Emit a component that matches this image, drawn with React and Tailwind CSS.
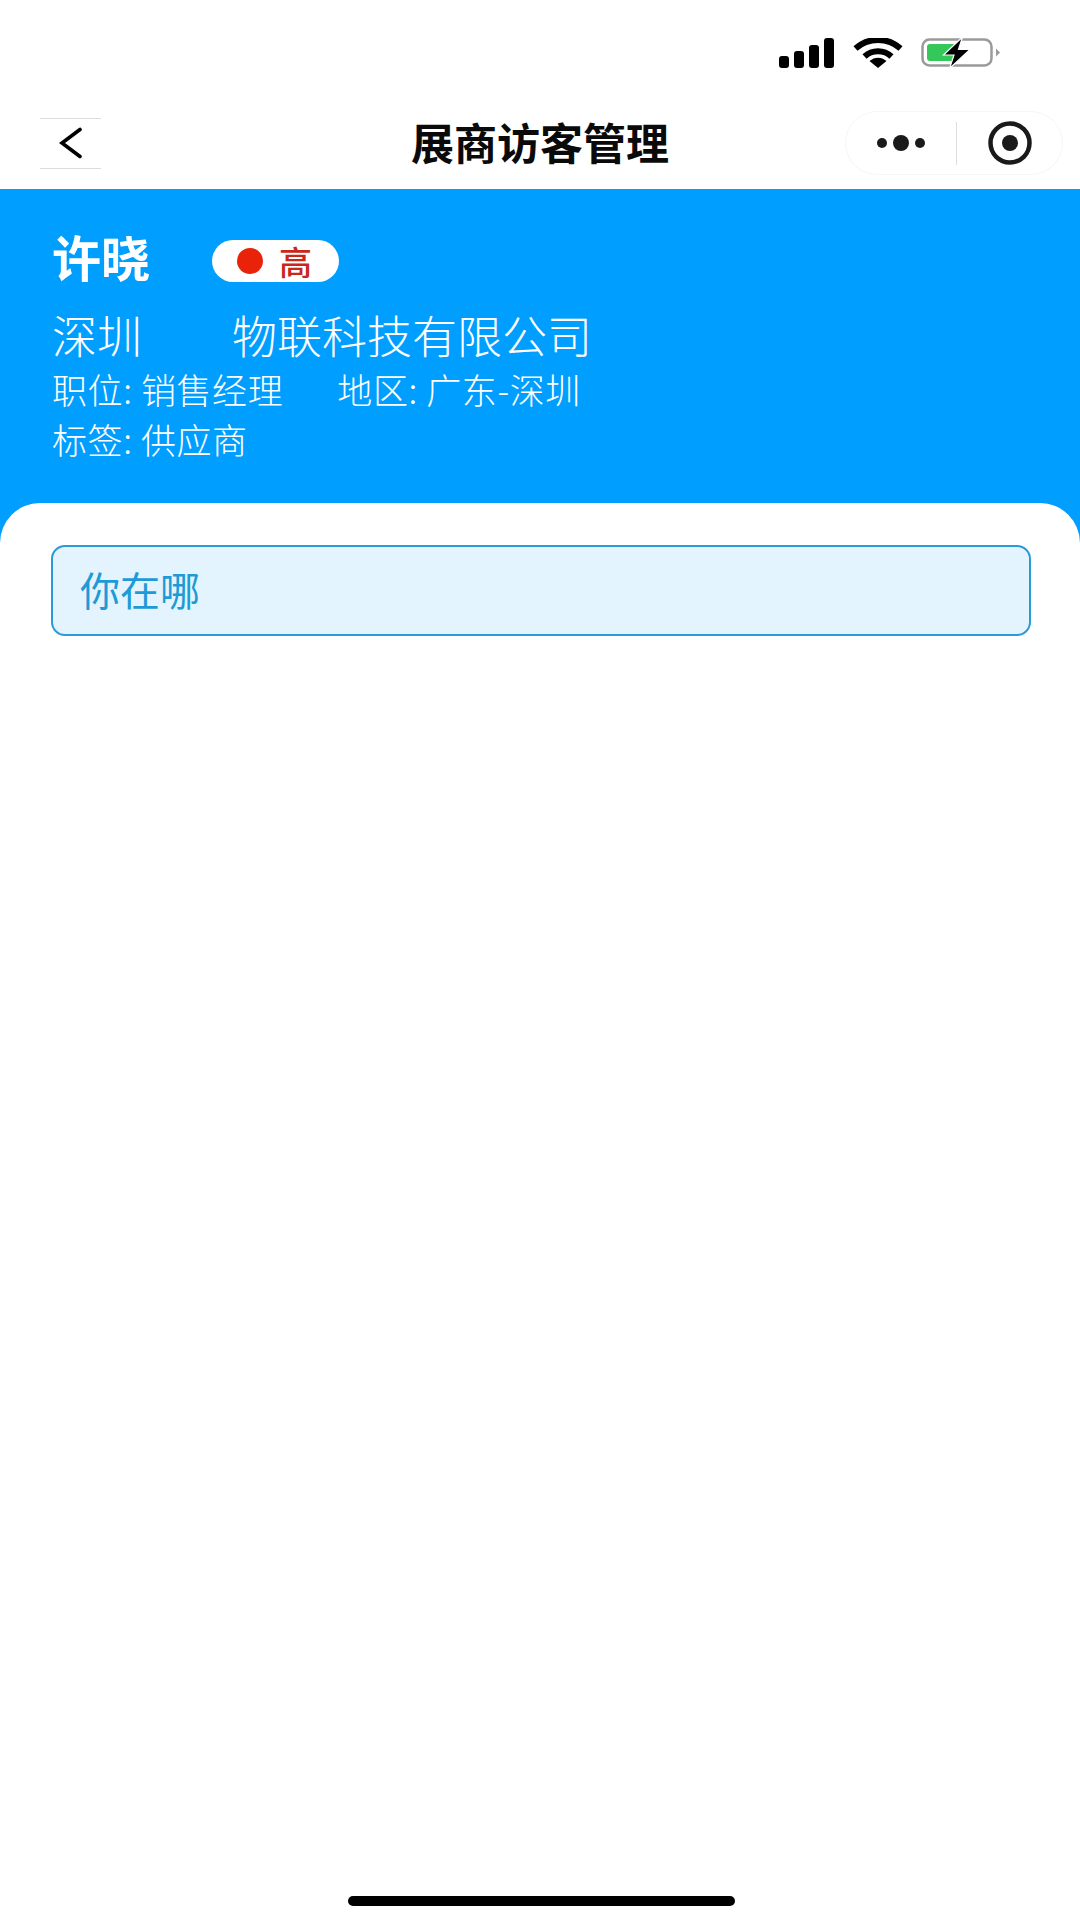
function SignalIcon() {
  return (
    <svg width="56" height="30" viewBox="0 0 56 30" fill="#000">
      <rect x="0" y="18" width="10" height="12" rx="3" />
      <rect x="15" y="13" width="10" height="17" rx="3" />
      <rect x="30" y="7" width="10" height="23" rx="3" />
      <rect x="45" y="0" width="10" height="30" rx="3" />
    </svg>
  )
}

function WifiIcon() {
  return (
    <svg width="50" height="30" viewBox="0 0 50 30" fill="none">
      <path d="M2.5 10.5C15 -1 35 -1 47.5 10.5" stroke="#000" strokeWidth="6" />
      <path d="M11.5 18.5C19 11.5 31 11.5 38.5 18.5" stroke="#000" strokeWidth="6" />
      <path d="M16.5 23L25 30L33.5 23C28.5 18.5 21.5 18.5 16.5 23Z" fill="#000" />
    </svg>
  )
}

function BatteryIcon() {
  return (
    <svg width="80" height="32" viewBox="0 0 80 32" fill="none">
      <rect x="1.5" y="2.5" width="69" height="26" rx="7" stroke="#9a9a9a" strokeWidth="2.5" />
      <path d="M75 11.5L79 15.5L75 19.5Z" fill="#9a9a9a" />
      <rect x="6" y="7" width="32" height="17" rx="3" fill="#34c759" />
      <path d="M41.5 0L22.5 18H33L28.5 31.5L49 12.5H37.5Z" fill="#000" stroke="#fff" strokeWidth="1.2" />
    </svg>
  )
}

function BackIcon() {
  return (
    <svg width="24" height="32" viewBox="0 0 24 32" fill="none">
      <path d="M21 2.5L3 16L21 29.5" stroke="#000" strokeWidth="3.6" strokeLinecap="round" strokeLinejoin="miter" />
    </svg>
  )
}

function MoreIcon() {
  return (
    <svg width="48" height="16" viewBox="0 0 48 16" fill="#1a1a1a">
      <circle cx="5" cy="8" r="5" />
      <circle cx="24" cy="8" r="8" />
      <circle cx="43" cy="8" r="5" />
    </svg>
  )
}

function TargetIcon() {
  return (
    <svg width="44" height="44" viewBox="0 0 44 44" fill="none">
      <circle cx="22" cy="22" r="19.5" stroke="#1a1a1a" strokeWidth="4.5" />
      <circle cx="22" cy="22" r="8" fill="#1a1a1a" />
    </svg>
  )
}

export default function App() {
  return (
    <div className="h-[1920px] w-[1080px] flex flex-col overflow-hidden bg-white font-['Noto_Sans_CJK_SC','Noto_Sans',sans-serif]">
      <div className="h-[92px] shrink-0 flex justify-end items-start pt-[38px] pr-[79px]">
        <SignalIcon />
        <div className="ml-[18px]"><WifiIcon /></div>
        <div className="ml-[18px] -mt-px"><BatteryIcon /></div>
      </div>

      <div className="h-[97px] shrink-0 flex items-center relative">
        <div className="ml-10 mt-[5px] w-[61px] h-[51px] border-y border-[#dcdcdc] flex items-center justify-center">
          <BackIcon />
        </div>
        <div className="absolute left-0 right-0 top-[19px] text-center text-[43px] leading-[60px] font-bold text-[#0a0a0a]">展商访客管理</div>
        <div className="ml-auto mr-[17px] mt-[5px] w-[218px] h-[64px] rounded-full border border-[#f6f6f6] flex items-center">
          <div className="w-[110px] flex justify-center"><MoreIcon /></div>
          <div className="w-px h-[43px] bg-[#dedede]" />
          <div className="flex-1 flex justify-center"><TargetIcon /></div>
        </div>
      </div>

      <div className="flex-1 flex flex-col bg-[#009efe]">
        <div className="h-[314px] shrink-0 pl-[52px] text-white">
          <div className="flex items-center pt-[49px]">
            <span className="h-[46px] text-[49px] leading-[36px] font-bold">许晓</span>
            <div className="ml-[62px] w-[127px] h-[42px] rounded-full bg-white flex items-center pl-[25px]">
              <span className="w-[26px] h-[26px] rounded-full bg-[#e9220a]" />
              <span className="ml-[16px] text-[33px] leading-[42px] font-medium text-[#c8281a]">高</span>
            </div>
          </div>
          <div className="mt-[23px] text-[45px] leading-[56px] font-light">深圳　　物联科技有限公司</div>
          <div className="mt-[4px] flex text-[35px] leading-[44px] font-light tracking-[0.6px]">
            <span>职位: 销售经理</span>
            <span className="ml-[54px]">地区: 广东-深圳</span>
          </div>
          <div className="mt-[6px] text-[35px] leading-[44px] font-light tracking-[0.6px]">标签: 供应商</div>
        </div>

        <div className="flex-1 flex flex-col bg-white rounded-t-[40px] pl-[51px] pr-[49px] pt-[42px]">
          <div className="h-[91px] rounded-[14px] border-[2.5px] border-[#2a9ad8] bg-[#e3f4fe] flex items-center pl-[27px] pb-1 text-[40px] font-normal text-[#1e9ad6]">你在哪</div>
          <div className="mt-auto mb-[14px] ml-[297px] w-[387px] h-[10px] rounded-full bg-black" />
        </div>
      </div>
    </div>
  )
}
